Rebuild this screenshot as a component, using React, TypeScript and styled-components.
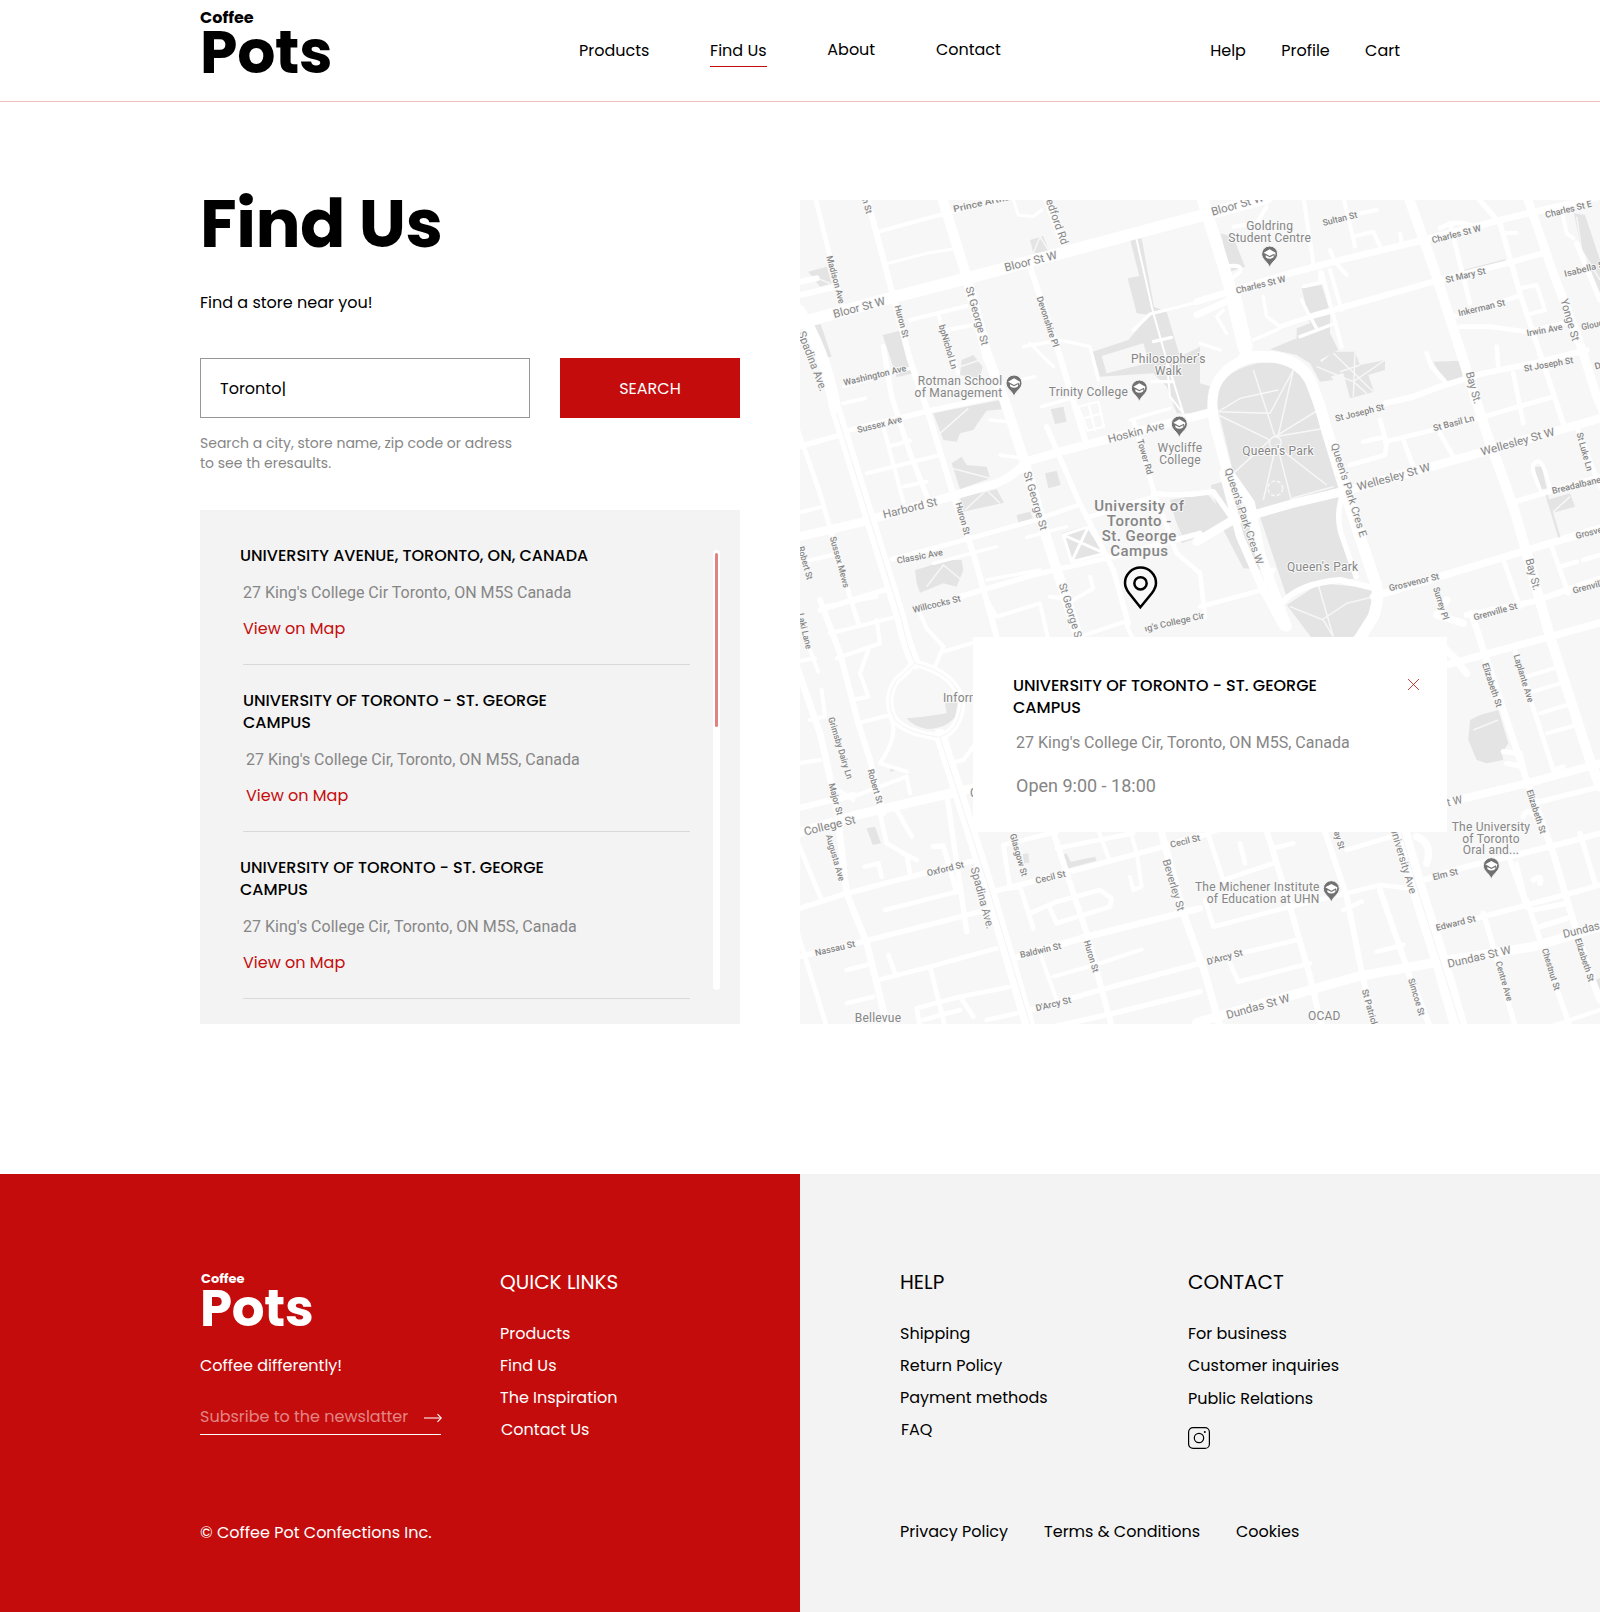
import React from "react";
import styled, { createGlobalStyle } from "styled-components";

const RED = "#c50c0c";
const GREY = "#868686";
const PANEL = "#f3f3f3";
const SANS = `Poppins, Inter, "Open Sans", sans-serif`;
const BODY = `Roboto, "Liberation Sans", sans-serif`;

const GlobalStyle = createGlobalStyle`
  * { box-sizing: border-box; }
  body { margin: 0; background: #fff; color: #000; font-family: ${SANS}; font-size: 16px; line-height: 25px; }
  ul { list-style: none; margin: 0; padding: 0; }
  h1, h2, h3, p { margin: 0; }
`;

const Page = styled.div`
  width: 1600px;
  overflow: hidden;
`;

const TextLink = styled.a`
  display: inline-block;
  color: inherit;
  text-decoration: none;
  white-space: nowrap;
`;

/* ---------- Header ---------- */
const Header = styled.header`
  display: flex;
  align-items: flex-start;
  justify-content: space-between;
  height: 102px;
  padding: 0 200px;
  border-bottom: 1px solid #f1bebe;
`;

const HeaderLogo = styled.div`
  width: 379px;
  padding-top: 9px;
  font-weight: 700;
`;
const LogoTop = styled.div`
  font-size: 16px;
  line-height: 17px;
`;
const LogoMain = styled.div`
  font-size: 60px;
  line-height: 52px;
  letter-spacing: -0.3px;
`;

const Nav = styled.nav<{ $gap: number }>`
  display: flex;
  gap: ${(p) => p.$gap}px;
  padding-top: 38px;
`;
const PrimaryNav = styled(Nav)`
  margin-right: auto;
`;
const NavLink = styled(TextLink)<{ $active?: boolean; $lift?: boolean }>`
  padding-bottom: 3px;
  margin-top: ${(p) => (p.$lift ? -1 : 0)}px;
  border-bottom: 1px solid ${(p) => (p.$active ? RED : "transparent")};
`;

/* ---------- Finder ---------- */
const Main = styled.main`
  display: grid;
  grid-template-columns: 800px 800px;
  padding: 98px 0 150px;
`;
const Finder = styled.section`
  padding: 0 60px 0 200px;
`;
const Title = styled.h1`
  font-size: 67px;
  line-height: 47px;
  font-weight: 700;
  letter-spacing: -0.5px;
`;
const Lead = styled.p`
  margin-top: 43px;
`;
const SearchRow = styled.div`
  display: grid;
  grid-template-columns: 330px 180px;
  gap: 30px;
  height: 60px;
  margin-top: 43px;
`;
const Field = styled.div`
  display: flex;
  align-items: center;
  padding: 1px 0 0 19px;
  border: 1px solid #979797;
`;
const SearchButton = styled.button`
  padding: 1px 0 0;
  border: 0;
  background: ${RED};
  color: #fff;
  font: 400 16px/25px ${SANS};
`;
const Hint = styled.p`
  margin-top: 15px;
  color: ${GREY};
  font-size: 14px;
  line-height: 20px;
`;

const Results = styled.div`
  display: flex;
  height: 514px;
  margin-top: 37px;
  padding: 34px 20px 0 43px;
  background: ${PANEL};
`;
const StoreList = styled.ul`
  width: 447px;
  margin-right: 23px;
`;
const StoreItem = styled.li`
  padding-bottom: 23px;
  margin-bottom: 24px;
  border-bottom: 1px solid #d9d9d9;
`;
const StoreName = styled.h3<{ $outdent?: boolean }>`
  margin-left: ${(p) => (p.$outdent ? -3 : 0)}px;
  padding-top: 1px;
  font-size: 16px;
  line-height: 22px;
  font-weight: 500;
  white-space: nowrap;
`;
const StoreBody = styled.div<{ $indent?: boolean }>`
  display: flex;
  flex-direction: column;
  align-items: flex-start;
  gap: 13px;
  padding-left: ${(p) => (p.$indent ? 3 : 0)}px;
  margin-top: 16px;
`;
const Address = styled.p`
  color: ${GREY};
  font-family: ${BODY};
  line-height: 20px;
`;
const MapLink = styled(TextLink)`
  color: ${RED};
`;
const ScrollTrack = styled.div`
  width: 7px;
  height: 440px;
  margin-top: 6px;
  padding: 3px 2px;
  border-radius: 4px;
  background: #fff;
`;
const ScrollThumb = styled.div`
  height: 174px;
  border-radius: 2px;
  background: #e08282;
`;

/* ---------- Map ---------- */
const MapPanel = styled.section`
  position: relative;
  height: 824px;
  overflow: hidden;
`;
const MapCanvas = styled.svg`
  display: block;
  width: 800px;
  height: 824px;
  font-family: ${BODY};
`;
const Popup = styled.div`
  position: absolute;
  left: 173px;
  top: 437px;
  display: flex;
  justify-content: space-between;
  align-items: flex-start;
  width: 474px;
  height: 195px;
  padding: 37px 28px 0 40px;
  background: #fff;
`;
const PopupAddress = styled(Address)`
  margin: 14px 0 0 3px;
`;
const Hours = styled.p`
  margin: 21px 0 0 3px;
  color: ${GREY};
  font: 18px/24px ${BODY};
`;
const CloseButton = styled.button`
  display: flex;
  margin-top: 5px;
  padding: 0;
  border: 0;
  background: none;
`;

type Road = [width: number, d: string];
type Label = [text: string, x1: number, y1: number, x2: number, y2: number, size?: number];

/* Map geometry is drawn at three units per pixel */
const parks: string[] = [
  "M25,215 L80,200 L95,250 L60,260 Z",
  "M28,380 L62,372 L95,470 L72,475 Z",
  "M248,405 L308,390 L340,520 L290,532 Z",
  "M690,120 L730,108 L748,155 L700,160 Z",
  "M990,118 L1025,115 L1062,320 L1100,335 L1140,470 L1200,440 L1200,640 L1130,640 L1100,560 L1060,520 L900,530 L878,455 L985,420 L1050,345 L1010,340 L983,235 L1018,228 Z",
  "M400,640 L600,600 L605,628 L560,632 L540,660 L520,690 L480,700 L470,725 L430,720 Z",
  "M455,790 L485,770 L500,795 L560,800 L570,835 L480,868 Z",
  "M480,890 L590,868 L612,908 L490,935 Z",
  "M485,480 L520,465 L548,500 L540,535 L480,525 Z",
  "M752,628 L790,620 L800,665 L765,672 Z",
  "M345,1110 L380,1100 L430,1080 L485,1080 L490,1110 L470,1160 L430,1150 L360,1178 L350,1150 Z",
  "M650,945 L690,935 L700,958 L655,968 Z",
  "M735,820 L770,812 L782,855 L745,865 Z",
  "M785,1000 L865,975 L920,1060 L815,1085 Z",
  "M1110,900 L1220,880 L1290,960 L1200,1010 L1145,1030 Z",
  "M1232,855 L1290,840 L1400,1110 L1330,1105 L1270,990 Z",
  "M1250,610 Q1245,520 1370,490 L1440,485 Q1510,500 1535,580 L1625,860 L1375,935 L1300,820 Z",
  "M1380,950 L1620,885 L1615,980 L1670,1135 L1530,1150 L1460,1190 Z",
  "M1460,1215 L1560,1150 L1725,1165 L1700,1270 L1640,1330 L1540,1320 Z",
  "M1200,550 L1235,560 L1225,630 L1200,640 Z",
  "M1262,100 L1300,112 L1335,200 L1290,215 Z",
  "M1505,265 L1565,255 L1590,335 L1590,400 L1615,450 L1560,480 L1600,540 L1560,545 L1530,490 L1490,465 L1410,448 L1490,415 L1490,385 L1530,370 Z",
  "M1600,455 L1665,455 L1680,495 L1755,480 L1755,510 L1705,525 L1722,575 L1650,595 L1630,520 L1570,535 L1550,500 Z",
  "M1900,485 L1980,482 L1990,540 L1935,550 Z",
  "M1990,210 L2115,178 L2118,188 L1995,218 Z",
  "M2322,40 L2355,45 L2400,180 L2400,300 L2340,130 Z",
  "M2205,800 L2225,800 L2240,865 L2212,870 Z",
  "M2240,900 L2310,880 L2325,920 L2255,940 Z",
  "M320,1555 L370,1550 L440,1540 L435,1510 L475,1500 L465,1550 Q440,1585 380,1587 Q340,1580 320,1555 Z",
  "M200,1885 L225,1880 L243,1930 L218,1935 Z",
  "M788,1965 L800,1960 L812,1985 L885,1970 L890,1982 L805,2005 Z",
  "M668,1962 L685,1960 L688,1988 L672,1990 Z",
  "M270,1700 L280,1695 L292,1708 L272,1716 Z",
  "M2010,1560 L2040,1545 L2095,1530 L2125,1630 L2105,1660 L2110,1680 L2060,1690 L2030,1680 L2005,1620 Z",
  "M2385,2340 L2400,2335 L2400,2380 Z",
];

const roads: Road[] = [
  [36, "M-10,372 L280,292 L500,235 L1200,48 L1400,-6"],
  [36, "M-5,330 Q70,440 105,620 L300,1250 Q320,1340 345,1390"],
  [22, "M345,1390 Q470,1420 485,1510 Q480,1590 420,1612"],
  [22, "M340,1385 Q330,1410 290,1440 Q250,1500 285,1560 Q320,1600 420,1612"],
  [38, "M420,1605 L565,2060 L690,2490"],
  [26, "M-10,1012 L190,965 L450,890 L590,850 Q640,830 680,785 L780,755 L1240,635"],
  [30, "M425,-10 L500,230 L560,460 L620,620 L675,790 L735,1000 L800,1200 L850,1360"],
  [18, "M200,-10 L280,290 L330,480 L385,640 L465,900 L520,1060 L590,1310"],
  [14, "M45,-10 L130,330"],
  [18, "M690,200 L780,470 L855,720"],
  [18, "M735,-10 L795,150"],
  [12, "M235,95 L430,42 L640,-10"],
  [9, "M265,190 L380,160 L455,148"],
  [12, "M330,360 L500,318"],
  [12, "M415,345 L475,520"], [12, "M430,392 L545,370"],
  [9, "M640,0 L655,45 L700,50 L725,30"],
  [18, "M0,245 L50,235 M0,285 L100,262"],
  [10, "M130,560 L330,505"],
  [16, "M250,440 L275,590 L330,760 L385,900"],
  [16, "M-10,742 L110,708 M150,690 L390,632 L610,585"],
  [14, "M-10,680 L60,880 L150,1190 L175,1270"],
  [12, "M-10,940 L60,922 M-10,1090 L110,1062"],
  [12, "M130,610 L195,595 M250,680 L310,905 M200,820 L420,765 M265,740 L330,722 M310,860 L380,845"],
  [10, "M670,440 L780,420 L870,440 L895,540 M690,430 L760,500 M550,470 L600,560 M600,765 L670,775 M570,660 L620,665 M640,545 L705,530 M725,620 L830,590"],
  [14, "M275,1078 L500,1018 L700,962 L835,915"],
  [16, "M60,1230 L270,1165 M480,1190 L700,1125 L980,1060 L1200,1000"],
  [10, "M560,1140 L720,1110 M400,1090 L590,1040 M680,1012 L800,980"],
  [16, "M740,680 L830,890 L940,1110 L985,1270"],
  [14, "M1000,660 L1060,870 L1130,1060 L1200,1120 L1215,1250"],
  [16, "M1060,880 Q1150,890 1240,875 L1300,960"],
  [14, "M870,950 L1060,890"],
  [12, "M750,1190 L820,1200 L880,1165 L870,1130"],
  [9, "M790,1005 L865,980 L915,1060 L815,1085 Z M790,1005 L915,1060 M865,980 L815,1085"],
  [7, "M835,620 L895,605 L912,680 L862,692 Z M850,655 L905,640 M865,610 L885,690"],
  [6, "M1010,120 L1060,340 L1100,480 L1110,590 L1150,640 M1100,480 L1150,640"],
  [10, "M1000,390 L1050,342 L1220,300 M1060,425 L1115,412 M1055,545 L1120,545 M990,660 L1110,625"],
  /* University Ave and the Queen's Park loop */
  [36, "M1205,-10 L1265,180 L1310,330 L1340,470"],
  [46, "M1300,290 L1335,440"],
  [30, "M1430,470 Q1310,460 1255,540 Q1225,590 1245,680 L1280,810 L1350,910 L1380,1060 L1460,1280"],
  [34, "M1330,475 Q1480,450 1530,540 Q1560,610 1580,690 L1650,920 L1720,1130 Q1745,1180 1720,1250 L1670,1330"],
  [24, "M1270,820 L1320,1010 L1390,1170 L1450,1280"],
  [26, "M1190,1025 L1290,965 L1480,910 L1640,872 L2000,770 L2400,655"],
  [16, "M1625,890 Q1605,960 1630,1020 L1668,1130"],
  [18, "M1450,1205 Q1500,1150 1620,1140 L1725,1165"],
  [14, "M1200,1220 L1385,1170 L1420,1110"],
  [20, "M1190,345 L1290,300 M1190,305 L1470,220 L1600,185 L1850,125 L2100,60 L2400,-10"],
  [14, "M1440,380 L1530,350"],
  [18, "M1530,350 L1600,330 L1900,245 L2120,190 L2235,158"],
  [10, "M1270,330 L1250,350 L1280,400 M1390,290 L1400,350 L1440,380 M1510,260 L1570,245 M1505,300 L1530,350 L1550,385 M1560,215 L1560,240 M1500,410 L1600,372 M1200,430 L1260,450 M1360,420 L1440,385"],
  [12, "M1565,215 L1625,440 M1590,210 L1625,330"],
  [12, "M1275,200 Q1330,190 1320,215 L1290,240 M1300,80 L1370,70 L1400,20 M1510,-10 L1540,190 M1590,150 L1605,185 L1640,225 M1630,-10 L1665,140 M1660,110 L1720,95 L1745,150 M1680,40 L1730,30 M1800,100 L1805,130"],
  [14, "M1920,85 Q1970,55 2020,80 M1950,70 L2010,310"],
  [30, "M1825,-10 L1900,200 L1990,480 L2060,700 L2140,920 L2180,1060 L2250,1310 L2370,1680 L2400,1760"],
  [26, "M2180,-10 L2260,220 L2340,430 L2390,590 L2420,660"],
  [14, "M1960,350 L2150,290 M1980,380 L2070,380 L2180,395 L2290,370"],
  [16, "M2030,-10 L2100,70 L2160,280 L2210,430 L2290,670"],
  [12, "M2160,265 L2210,255 L2235,330 L2180,345 M2110,100 L2150,98 M2285,30 L2300,100 L2320,115"],
  [18, "M1755,610 L1840,590 L1920,560 L2050,520 L2200,490 L2360,450"],
  [14, "M1755,725 L1900,690 L2050,650 L2260,590"],
  [14, "M1880,460 L1895,500 L1935,545 M1740,660 L1760,730 L1755,765 L1650,795 M1690,725 L1750,712 M1810,720 L1840,800 M1920,700 L1960,770 M2090,440 L2095,500 M2140,520 L2170,670"],
  [22, "M1720,1190 L2150,1060 L2400,985"],
  [18, "M2000,1245 L2200,1205 L2400,1135"],
  [16, "M2145,905 L2400,830"],
  [12, "M2220,870 L2198,810 Q2198,782 2218,785 Q2232,790 2250,865"],
  [14, "M2110,1080 L2160,1220 M2255,1040 L2305,1180 M2330,680 L2400,860 M2280,1100 L2330,1085 M2350,1080 L2400,1065"],
  [16, "M2330,130 L2400,300"],
  /* South-east */
  [22, "M1920,1400 L2250,1310 L2400,1268"],
  [20, "M2015,1240 L2050,1350 L2180,1740 L2260,1960 L2310,2130 L2370,2320 L2400,2400"],
  [14, "M2140,1340 L2260,1710 L2290,1700"],
  [12, "M2180,1430 L2260,1405 M2200,1475 L2280,1450 M2220,1540 L2300,1515 M2240,1600 L2330,1575"],
  [24, "M1930,1810 L2180,1750 L2400,1690"],
  [16, "M2200,1810 L2400,1760 M2110,1655 L2160,1660 L2170,1700 L2120,1690"],
  [52, "M1790,1850 L1850,2060 L1920,2280 L1980,2490"],
  [18, "M1870,2040 L2000,2000 L2250,1940 L2400,1900"],
  [16, "M1920,2185 L2050,2150 L2310,2080 L2400,2055"],
  [28, "M1190,2468 L1390,2410 L1670,2330 L1920,2285 L2200,2240 L2400,2180"],
  [18, "M1570,1880 L1640,2090 L1690,2340 L1725,2480"],
  [18, "M1740,2070 L1830,2330 L1890,2480"],
  [14, "M1215,2100 L1240,2180 L1470,2120 L1640,2080 L1740,2055 L1830,2065"],
  [18, "M1390,1860 L1470,2120 L1530,2330 L1565,2480"],
  [14, "M1220,1890 L1270,2040 L1420,1990 M1200,1910 L1280,1880 M1420,1945 L1480,1930 M1320,1930 L1335,1990"],
  [14, "M1195,2290 L1490,2220 M1290,2290 L1315,2345 L1530,2290 M1730,2255 L1810,2235 M1630,2130 L1685,2105 M1640,1950 L1790,1905"],
  [16, "M2050,2140 L2080,2240 L2145,2480 M2180,2100 L2230,2250 L2310,2480 M2340,1900 L2385,2050 M2220,2180 L2300,2155 M2130,1980 L2180,2120 M2200,2130 L2300,2110"],
  [12, "M2250,2480 L2400,2430 M2150,1990 L2180,2110"],
  [22, "M1850,1910 Q1900,1930 1880,1990 M1920,1330 L1960,1370 L2000,1420 M1940,1200 L1910,1245 L1990,1270"],
  [16, "M2200,2040 Q2230,2020 2220,2050 M2170,1850 Q2180,1820 2210,1850"],
  /* South-west */
  [28, "M-10,1900 L170,1845 L450,1780 L540,1760"],
  [18, "M-10,1825 L160,1785"],
  [20, "M-20,1370 L60,1600 L110,1820 L140,2080 L200,2230 L265,2490"],
  [18, "M60,1200 L120,1360 L175,1570 L210,1680 L250,1840"],
  [14, "M240,1840 L260,1930 L320,1965 L330,2020 M290,1830 L335,1910 M310,1960 L350,1980"],
  [12, "M70,1220 L230,1190 M90,1300 L290,1250 M110,1375 L240,1330 L230,1260 M205,1350 L180,1420 L205,1490 L155,1500 M170,1570 L270,1545 M270,1550 Q300,1600 240,1690 L320,1715 M-10,1385 L45,1375 M30,1350 L55,1415 M65,1470 L75,1550 L30,1560"],
  [12, "M355,1230 L380,1285 L430,1340 L405,1400 M430,1355 L530,1325 M560,1200 L590,1250 L720,1210 L745,1320 M840,1310 L975,1265 L1000,1320"],
  [12, "M-10,1690 L60,1680 M160,1790 L240,1760 L320,1730 L330,1780 M60,1600 L100,1760 L160,1800 M535,1620 L490,1680 L465,1685"],
  [16, "M-10,2128 L140,2080 L370,2020 L530,1980"],
  [14, "M255,2130 L470,2075 M-10,1920 L65,2100 M-10,2190 L80,2480 M195,2000 L235,1990 L245,2030"],
  [16, "M-10,2272 L200,2222 L560,2130"],
  [16, "M440,1780 L500,2195 M400,1940 L430,1938 L470,2075"],
  [14, "M235,2340 L390,2300 L590,2245 M140,2310 L200,2295 M140,2410 L220,2390 M265,2265 L285,2320"],
  [14, "M390,2300 L435,2480 M360,2480 L350,2425 L480,2390 L625,2362 M480,2390 L520,2450 M370,2460 L480,2430 M560,2460 L650,2440"],
  [16, "M590,2072 L800,2018 L1090,1940 L1200,1905"],
  [14, "M610,1935 L770,1895 M610,1935 L630,2065 L660,2060 L700,2185 M770,1945 L1000,1900"],
  [18, "M755,1880 L820,2080 L860,2200 L935,2480"],
  [14, "M690,2140 L770,2105 L900,2070 L935,2095 L930,2120 L770,2170 L745,2115"],
  [20, "M640,2275 L860,2210 L1200,2125"],
  [12, "M760,2330 L900,2290 L1025,2248 M720,2260 L770,2400 M990,2030 L1000,2070 L1025,2060 L1010,1960 M895,1890 L930,1985 M990,1890 L1010,1960"],
  [16, "M690,2430 L900,2370 L1200,2290"],
  [16, "M940,2440 L1200,2375 M760,2480 L940,2440"],
  [22, "M1080,1880 L1150,2140 L1215,2320 L1260,2480"],
];

const footpaths =
  "M1255,635 L1320,595 L1435,570 M1480,510 L1390,900 M1360,510 L1425,710 L1475,905 M1480,510 L1410,640 L1255,635 M1255,645 L1400,715 L1580,855 M1425,710 L1555,630 M1425,710 L1575,685 M1300,820 L1410,720 M1475,895 L1600,860 M1470,1220 L1570,1260 L1600,1310 M1555,1155 L1600,1310 M1565,1260 L1640,1210 L1720,1190 M1550,500 L1660,545 L1755,480 M1665,455 L1660,590 M1620,515 L1680,495 M1660,545 L1700,580 M1600,460 L1720,575 M1720,320 L1725,350 M1690,370 L1700,440 L1720,480 M1690,370 L1760,352 L1800,385 L1940,350 M1800,390 L1810,440 L1830,560 M1750,470 L1860,460 M1755,520 L1870,500 M1815,800 L1840,910 L1850,1010 L1790,1080 M1760,1050 Q1790,1110 1860,1050 L1840,1120 L1770,1110 Z M1720,1050 L1890,1040 M1580,590 L1640,600 L1700,590 M1200,1215 L1260,1260 L1340,1300 M700,160 L720,110 L745,150 M40,230 L90,250 M495,930 L560,870 L600,910 M480,500 L540,480 M420,700 L505,625 M455,805 L570,835 M380,1160 L430,1095 L485,1140 M1110,930 L1150,1020 M2330,50 L2345,150 L2400,240 M2255,940 L2310,890 M2260,1350 L2400,1420 M2020,1590 L2095,1560";

const labels: Label[] = [
  ["n St", 195, -5, 208, 40], ["Prince Arthur", 460, 28, 640, -12], ["edford Rd", 748, -2, 795, 132, 33],
  ["Madison Ave", 88, 168, 126, 310], ["Bloor St W", 100, 343, 255, 302, 34], ["Bloor St W", 614, 203, 770, 164, 34],
  ["Huron St", 292, 316, 318, 412], ["St George St", 507, 260, 556, 435, 32], ["Devonshire Pl", 718, 290, 768, 440],
  ["bpNichol Ln", 425, 375, 464, 506], ["Washington Ave", 131, 548, 318, 504], ["Sussex Ave", 172, 690, 305, 657],
  ["Spadina Ave.", 4, 395, 72, 572, 34], ["Hoskin Ave", 924, 718, 1092, 675, 33], ["Tower Rd", 1020, 718, 1050, 822],
  ["Harbord St", 249, 944, 411, 904, 34], ["St George St", 681, 815, 732, 990, 32], ["Huron St", 475, 908, 502, 1004],
  ["Classic Ave", 291, 1082, 428, 1056], ["Sussex Mews", 98, 1010, 140, 1162], ["Robert St", 2, 1040, 30, 1138],
  ["Willcocks St", 338, 1230, 481, 1195], ["St George S", 787, 1150, 836, 1312, 32], ["ıg's College Cir", 1034, 1286, 1212, 1246],
  ["Bloor St W", 1234, 36, 1390, -8, 34], ["Sultan St", 1568, 69, 1671, 44], ["Charles St W", 1308, 272, 1456, 236],
  ["Charles St W", 1896, 121, 2042, 84], ["Charles St E", 2236, 45, 2375, 11], ["St Mary St", 1937, 240, 2056, 212],
  ["Inkerman St", 1975, 340, 2115, 307], ["Isabella St", 2293, 222, 2420, 190], ["Irwin Ave", 2180, 400, 2287, 380],
  ["Glouc", 2344, 382, 2408, 368], ["Yonge St", 2292, 297, 2328, 422, 33], ["St Joseph St", 2172, 506, 2319, 480],
  ["D", 2384, 500, 2402, 495], ["St Joseph St", 1606, 656, 1752, 620], ["Bay St.", 2008, 516, 2034, 610, 33],
  ["St Basil Ln", 1900, 685, 2022, 653], ["Wellesley St W", 2043, 756, 2263, 694, 34], ["Wellesley St W", 1672, 861, 1890, 800, 34],
  ["St Luke Ln", 2338, 698, 2370, 812], ["Queen's Park Cres E", 1603, 730, 1691, 1010, 32], ["Queen's Park Cres W", 1284, 805, 1380, 1092, 32],
  ["Breadalbane", 2256, 873, 2402, 838], ["Grosvenor St", 1767, 1165, 1917, 1128], ["Grosven", 2327, 1008, 2420, 985],
  ["Bay St.", 2187, 1076, 2212, 1170, 33], ["Surrey Pl", 1908, 1162, 1938, 1258],
  ["Grenville St", 2021, 1253, 2151, 1217], ["Grenville", 2318, 1172, 2420, 1146], ["Laki Lane", 2, 1240, 27, 1346],
  ["Grimsby Dairy Ln", 93, 1552, 150, 1736], ["Major St", 94, 1750, 120, 1844], ["Robert St", 211, 1708, 240, 1810],
  ["College St", 12, 1895, 166, 1858, 34], ["Augusta Ave", 86, 1904, 126, 2042], ["Oxford St", 381, 2020, 491, 1993],
  ["Spadina Ave.", 523, 2002, 572, 2186, 34], ["Glasgow St", 638, 1902, 674, 2028], ["Cecil St", 707, 2042, 796, 2021],
  ["Cecil St", 1111, 1934, 1200, 1913], ["Beverley St", 1098, 1978, 1144, 2132, 32], ["Nassau St", 45, 2259, 165, 2231],
  ["Baldwin St", 660, 2265, 783, 2237], ["Huron St", 860, 2222, 888, 2316], ["D'Arcy St", 707, 2425, 813, 2399],
  ["Elizabeth St", 2055, 1390, 2098, 1520], ["Laplante Ave", 2149, 1364, 2193, 1506], ["t W", 1941, 1808, 1986, 1798, 34],
  ["Elizabeth St", 2188, 1770, 2230, 1900], ["ay St", 1610, 1894, 1626, 1946], ["University Ave", 1780, 1880, 1840, 2080, 32],
  ["Elm St", 1898, 2032, 1973, 2014], ["Edward St", 1908, 2184, 2026, 2155], ["Dundas St W", 1943, 2292, 2132, 2248, 34],
  ["Dundas St", 2289, 2203, 2436, 2166, 34], ["Centre Ave", 2095, 2284, 2130, 2402], ["Chestnut St", 2234, 2246, 2272, 2370],
  ["Elizabeth St", 2333, 2216, 2375, 2344], ["D'Arcy St", 1221, 2286, 1327, 2257], ["Dundas St W", 1279, 2446, 1468, 2393, 34],
  ["St Patrick St", 1694, 2368, 1734, 2510], ["Simcoe St", 1833, 2336, 1866, 2446],
];

type Poi = { lines: string[]; x: number; y: number; anchor?: "middle" | "end"; size?: number; weight?: number; step?: number };
const pois: Poi[] = [
  { lines: ["Rotman School", "of Management"], x: 607, y: 556, anchor: "end" },
  { lines: ["Trinity College"], x: 984, y: 589, anchor: "end" },
  { lines: ["Philosopher's", "Walk"], x: 1105, y: 488 },
  { lines: ["Wycliffe", "College"], x: 1140, y: 757 },
  { lines: ["University of", "Toronto -", "St. George", "Campus"], x: 1018, y: 932, size: 45, weight: 500, step: 45.5 },
  { lines: ["Goldring", "Student Centre"], x: 1409, y: 91 },
  { lines: ["Queen's Park"], x: 1434, y: 764 },
  { lines: ["Queen's Park"], x: 1568, y: 1113 },
  { lines: ["Inform"], x: 484, y: 1505 },
  { lines: ["C"], x: 522, y: 1790 },
  { lines: ["Bellevue"], x: 234, y: 2466 },
  { lines: ["OCAD"], x: 1573, y: 2460 },
  { lines: ["The Michener Institute", "of Education at UHN"], x: 1559, y: 2072, anchor: "end" },
  { lines: ["The University", "of Toronto", "Oral and..."], x: 2073, y: 1892 },
];

const pins: [number, number][] = [[642, 552], [1018, 567], [1138, 675], [1409, 165], [1594, 2069], [2074, 2000]];

function StreetLabel({ label }: { label: Label }) {
  const [text, x1, y1, x2, y2, size = 27] = label;
  const length = Math.hypot(x2 - x1, y2 - y1);
  const angle = (Math.atan2(y2 - y1, x2 - x1) * 180) / Math.PI;
  return (
    <text
      transform={`translate(${x1} ${y1}) rotate(${angle})`}
      dy={size * 0.34}
      fontSize={size}
      fontWeight={size < 30 ? 500 : 400}
      textLength={length}
      lengthAdjust="spacingAndGlyphs"
    >
      {text}
    </text>
  );
}

function CampusPin({ x, y }: { x: number; y: number }) {
  return (
    <g transform={`translate(${x} ${y})`}>
      <path d="M0,38 C-5,20 -24,14 -24,-3 A24,24 0 1 1 24,-3 C24,14 5,20 0,38 Z" fill="#717171" stroke="#f7f7f7" strokeWidth="3" />
      <path d="M0,-17 L18,-7 L16,5 L14,-4 L0,3 L-18,-7 Z M-12,1 L0,7 L12,1 V7 Q0,16 -12,7 Z" fill="#fff" />
    </g>
  );
}

function CityMap() {
  return (
    <MapCanvas viewBox="0 0 2400 2472">
      <rect width="2400" height="2472" fill="#f7f7f7" />
      <g fill="#e4e4e4">
        {parks.map((d) => <path key={d} d={d} />)}
      </g>
      <path d="M905,468 L1030,430 L1048,488 L920,520 Z" fill="#f7f7f7" />
      <path d={footpaths} fill="none" stroke="#f7f7f7" strokeWidth="4.500" />
      <circle cx="1426" cy="865" r="22" fill="none" stroke="#f7f7f7" strokeWidth="4.500" strokeDasharray="12 6" />
      <circle cx="1426" cy="728" r="18" fill="#e4e4e4" stroke="#f7f7f7" strokeWidth="4.500" />
      <g fill="none" stroke="#fff" strokeLinecap="round" strokeLinejoin="round">
        {roads.map(([w, d]) => <path key={d} d={d} strokeWidth={w} />)}
      </g>
      <path d="M2240,885 L2278,1012" stroke="#e4e4e4" strokeWidth="7" />
      <g fill="none" stroke="#f4f4f4" strokeWidth="3">
        <path d="M110,640 L305,1260 Q320,1340 345,1390 M420,1612 L565,2060 L690,2472 M1790,1850 L1850,2060 L1920,2280 L1980,2472" />
        <path d="M345,1390 Q470,1420 485,1510 Q480,1590 420,1612 Q320,1600 285,1560 Q250,1500 290,1440 Z" />
      </g>
      <g fill="#868686" stroke="#f9f9f9" strokeWidth="6" paintOrder="stroke" strokeLinejoin="round">
        {labels.map((l, i) => <StreetLabel key={i} label={l} />)}
        {pois.map((p, i) => (
          <text key={i} textAnchor={p.anchor ?? "middle"} fontSize={p.size ?? 36} fontWeight={p.weight ?? 400} letterSpacing={p.size ? 1.4 : 0.7}>
            {p.lines.map((line, n) => (
              <tspan key={n} x={p.x} y={p.y + n * (p.step ?? 35.5)}>{line}</tspan>
            ))}
          </text>
        ))}
      </g>
      {pins.map(([x, y]) => <CampusPin key={x} x={x} y={y} />)}
      <path
        d="M1021,1222 L987,1179 C978,1167 975,1160 975,1149 A46.5,46.5 0 0 1 1068,1149 C1068,1160 1065,1167 1056,1179 Z"
        fill="#f9f9f9" stroke="#000" strokeWidth="7.5"
      />
      <circle cx="1021.500" cy="1150" r="18.500" fill="#f9f9f9" stroke="#000" strokeWidth="7.5" />
    </MapCanvas>
  );
}

/* ---------- Footer ---------- */
const Footer = styled.footer`
  display: grid;
  grid-template-columns: 800px 800px;
  height: 438px;
`;
const FooterHalf = styled.div<{ $tone: "red" | "light" }>`
  display: grid;
  grid-template-columns: ${(p) => (p.$tone === "red" ? "300px 1fr" : "288px 1fr")};
  grid-template-rows: ${(p) => (p.$tone === "red" ? "249px" : "248px")} 25px;
  align-items: start;
  padding: ${(p) => (p.$tone === "red" ? "97px 0 0 200px" : "97px 0 0 100px")};
  background: ${(p) => (p.$tone === "red" ? RED : PANEL)};
  color: ${(p) => (p.$tone === "red" ? "#fff" : "#000")};
`;
const FooterLogo = styled.div`
  font-weight: 700;
  ${LogoTop} { margin-left: 1px; font-size: 13px; line-height: 15px; }
  ${LogoMain} { font-size: 51.5px; line-height: 44px; }
`;
const Tagline = styled.p`
  margin-top: 23px;
`;
const Newsletter = styled.div`
  display: flex;
  align-items: center;
  justify-content: space-between;
  width: 241px;
  margin-top: 26px;
  padding-bottom: 5px;
  border-bottom: 1px solid #fff;
`;
const Placeholder = styled.span`
  color: #e28585;
  white-space: nowrap;
`;
const ArrowIcon = styled.svg`
  flex: none;
  margin: 3px -1px 0 0;
`;
const ColumnTitle = styled.h2`
  margin: -1px 0 27px;
  font-size: 20px;
  line-height: 24px;
  font-weight: 400;
`;
const LinkList = styled.ul`
  display: flex;
  flex-direction: column;
  gap: 8px;
`;
const LinkItem = styled.li<{ $dx?: number; $dy?: number }>`
  height: 24px;
  padding: ${(p) => p.$dy ?? 0}px 0 0 ${(p) => p.$dx ?? 0}px;
`;
const InstagramIcon = styled.svg`
  display: block;
  margin-top: 18px;
`;
const Legal = styled.div`
  grid-column: 1 / -1;
  display: flex;
  gap: 36px;
  white-space: nowrap;
`;

type LinkData = { text: string; dx?: number; dy?: number };

function LinkColumn({ title, links, children }: { title: string; links: LinkData[]; children?: React.ReactNode }) {
  return (
    <div>
      <ColumnTitle>{title}</ColumnTitle>
      <LinkList>
        {links.map((l) => (
          <LinkItem key={l.text} $dx={l.dx} $dy={l.dy}>
            <TextLink>{l.text}</TextLink>
          </LinkItem>
        ))}
      </LinkList>
      {children}
    </div>
  );
}

type Store = { name: string[]; address: string; outdent?: boolean; indent?: boolean };
const stores: Store[] = [
  { name: ["UNIVERSITY AVENUE, TORONTO, ON, CANADA"], address: "27 King's College Cir Toronto, ON M5S Canada", outdent: true },
  { name: ["UNIVERSITY OF TORONTO - ST. GEORGE", "CAMPUS"], address: "27 King's College Cir, Toronto, ON M5S, Canada", indent: true },
  { name: ["UNIVERSITY OF TORONTO - ST. GEORGE", "CAMPUS"], address: "27 King's College Cir, Toronto, ON M5S, Canada", outdent: true },
];

function Lines({ lines }: { lines: string[] }) {
  return <>{lines.map((l, i) => <React.Fragment key={i}>{i > 0 && <br />}{l}</React.Fragment>)}</>;
}

export default function App() {
  return (
    <Page>
      <GlobalStyle />
      <Header>
        <HeaderLogo>
          <LogoTop>Coffee</LogoTop>
          <LogoMain>Pots</LogoMain>
        </HeaderLogo>
        <PrimaryNav $gap={60.7}>
          <NavLink>Products</NavLink>
          <NavLink $active>Find Us</NavLink>
          <NavLink $lift>About</NavLink>
          <NavLink $lift>Contact</NavLink>
        </PrimaryNav>
        <Nav $gap={35.3}>
          <NavLink>Help</NavLink>
          <NavLink>Profile</NavLink>
          <NavLink>Cart</NavLink>
        </Nav>
      </Header>

      <Main>
        <Finder>
          <Title>Find Us</Title>
          <Lead>Find a store near you!</Lead>
          <SearchRow>
            <Field>Toronto|</Field>
            <SearchButton>SEARCH</SearchButton>
          </SearchRow>
          <Hint>Search a city, store name, zip code or adress<br />to see th eresaults.</Hint>
          <Results>
            <StoreList>
              {stores.map((s, i) => (
                <StoreItem key={i}>
                  <StoreName $outdent={s.outdent}><Lines lines={s.name} /></StoreName>
                  <StoreBody $indent={s.indent}>
                    <Address>{s.address}</Address>
                    <MapLink>View on Map</MapLink>
                  </StoreBody>
                </StoreItem>
              ))}
            </StoreList>
            <ScrollTrack><ScrollThumb /></ScrollTrack>
          </Results>
        </Finder>

        <MapPanel>
          <CityMap />
          <Popup>
            <div>
              <StoreName><Lines lines={["UNIVERSITY OF TORONTO - ST. GEORGE", "CAMPUS"]} /></StoreName>
              <PopupAddress>27 King's College Cir, Toronto, ON M5S, Canada</PopupAddress>
              <Hours>Open 9:00 - 18:00</Hours>
            </div>
            <CloseButton aria-label="Close">
              <svg width="11" height="11" viewBox="0 0 11 11" stroke={RED} strokeWidth="0.8">
                <path d="M0,0 L11,11 M11,0 L0,11" />
              </svg>
            </CloseButton>
          </Popup>
        </MapPanel>
      </Main>

      <Footer>
        <FooterHalf $tone="red">
          <div>
            <FooterLogo>
              <LogoTop>Coffee</LogoTop>
              <LogoMain>Pots</LogoMain>
            </FooterLogo>
            <Tagline>Coffee differently!</Tagline>
            <Newsletter>
              <Placeholder>Subsribe to the newslatter</Placeholder>
              <ArrowIcon width="18" height="10" viewBox="0 0 18 10" fill="none" stroke="#fff">
                <path d="M0,5 H17" opacity="0.75" strokeWidth="1.4" />
                <path d="M13.500,1.200 L17.300,5 L13.500,8.800" strokeWidth="1.1" />
              </ArrowIcon>
            </Newsletter>
          </div>
          <LinkColumn
            title="QUICK LINKS"
            links={[{ text: "Products" }, { text: "Find Us" }, { text: "The Inspiration" }, { text: "Contact Us", dx: 1 }]}
          />
          <Legal><p>© Coffee Pot Confections Inc.</p></Legal>
        </FooterHalf>
        <FooterHalf $tone="light">
          <LinkColumn
            title="HELP"
            links={[{ text: "Shipping" }, { text: "Return Policy" }, { text: "Payment methods" }, { text: "FAQ", dx: 1 }]}
          />
          <LinkColumn
            title="CONTACT"
            links={[{ text: "For business" }, { text: "Customer inquiries" }, { text: "Public Relations", dy: 1 }]}
          >
            <InstagramIcon width="22" height="22" viewBox="0 0 22 22" fill="none" stroke="#000" strokeWidth="1.2">
              <rect x="0.6" y="0.6" width="20.8" height="20.8" rx="4.500" />
              <circle cx="11" cy="11" r="4.700" />
              <circle cx="16.800" cy="5" r="1" fill="#000" stroke="none" />
            </InstagramIcon>
          </LinkColumn>
          <Legal>
            <TextLink>Privacy Policy</TextLink>
            <TextLink>Terms &amp; Conditions</TextLink>
            <TextLink>Cookies</TextLink>
          </Legal>
        </FooterHalf>
      </Footer>
    </Page>
  );
}
